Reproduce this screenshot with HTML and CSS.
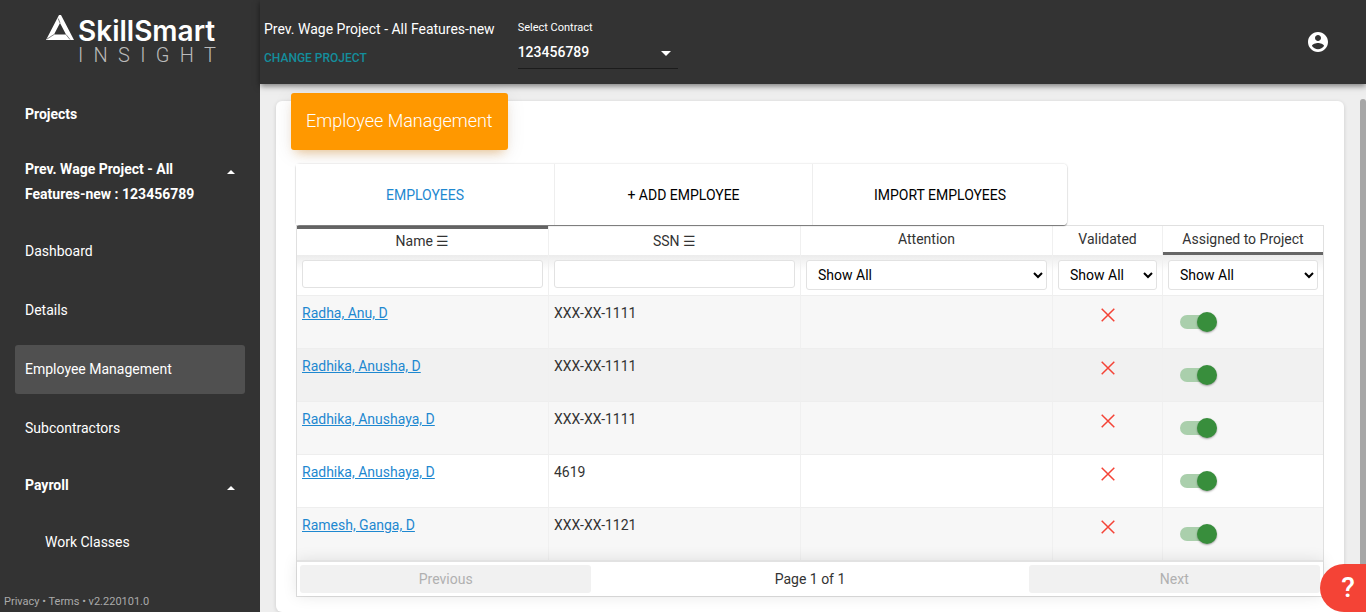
FILE: index.html
```html
<!DOCTYPE html>
<html lang="en">
<head>
<meta charset="utf-8">
<meta name="viewport" content="width=device-width, initial-scale=1">
<title>Employee Management</title>
<link rel="stylesheet" href="styles.css">
</head>
<body>
<div class="app">
  <aside class="sidebar">
    <a class="brand" href="#" aria-label="SkillSmart Insight">
      <svg class="brand-mark" viewBox="0 0 28 26" aria-hidden="true">
        <path fill="#fff" fill-rule="evenodd" d="M13 0H15L28 25H0ZM14 8 8 19.500H20Z"/>
        <path stroke="#333" stroke-width=".6" fill="none" d="M14 8 12.200 3.500M8 19.500 1 24M20 19.500 24 24.500"/>
      </svg>
      <span class="brand-words">
        <span class="brand-name">SkillSmart</span>
        <span class="brand-sub"><span>I</span><span>N</span><span>S</span><span>I</span><span>G</span><span>H</span><span>T</span></span>
      </span>
    </a>
    <nav class="nav">
      <a class="nav-link strong" href="#">Projects</a>
      <button class="nav-group two-line" type="button"><span>Prev. Wage Project - All Features-new : 123456789</span><svg class="caret" viewBox="0 0 8 4" aria-hidden="true"><path fill="#fff" d="M0 4 4 0 8 4Z"/></svg></button>
      <a class="nav-link" href="#">Dashboard</a>
      <a class="nav-link" href="#">Details</a>
      <a class="nav-link active" href="#">Employee Management</a>
      <a class="nav-link" href="#">Subcontractors</a>
      <button class="nav-group" type="button"><span>Payroll</span><svg class="caret" viewBox="0 0 8 4" aria-hidden="true"><path fill="#fff" d="M0 4 4 0 8 4Z"/></svg></button>
      <a class="nav-link nested" href="#">Work Classes</a>
    </nav>
    <footer class="legal"><a href="#">Privacy</a> • <a href="#">Terms</a> • v2.220101.0</footer>
  </aside>
  <div class="content">
    <header class="topbar">
      <div class="project">
        <span class="project-name">Prev. Wage Project - All Features-new</span>
        <button class="change" type="button">CHANGE PROJECT</button>
      </div>
      <div class="contract">
        <label for="contract">Select Contract</label>
        <div class="contract-field">
          <select id="contract"><option>123456789</option></select>
          <svg class="contract-arrow" viewBox="0 0 10 5" aria-hidden="true"><path fill="#fff" d="M0 0H10L5 5Z"/></svg>
        </div>
      </div>
      <button class="account" type="button" aria-label="Account">
        <svg viewBox="0 0 24 24" aria-hidden="true"><path fill="#fff" d="M12 2C6.480 2 2 6.480 2 12s4.480 10 10 10 10-4.480 10-10S17.520 2 12 2zm0 3c1.660 0 3 1.340 3 3s-1.340 3-3 3-3-1.340-3-3 1.340-3 3-3zm0 14.200c-2.500 0-4.710-1.280-6-3.220.030-1.990 4-3.080 6-3.080 1.990 0 5.970 1.090 6 3.080-1.290 1.940-3.500 3.220-6 3.220z"/></svg>
      </button>
    </header>
    <main class="main">
      <section class="card">
        <h1 class="card-title">Employee Management</h1>
        <div class="tabs" role="tablist">
          <button class="tab selected" type="button" role="tab" aria-selected="true">EMPLOYEES</button>
          <button class="tab" type="button" role="tab" aria-selected="false">+ ADD EMPLOYEE</button>
          <button class="tab" type="button" role="tab" aria-selected="false">IMPORT EMPLOYEES</button>
        </div>
        <div class="grid">
          <table>
            <colgroup><col><col><col><col class="col-validated"><col class="col-assigned"></colgroup>
            <thead>
              <tr class="heads">
                <th class="sortable sort-asc" scope="col">Name ☰</th><th class="sortable" scope="col">SSN ☰</th><th scope="col">Attention</th><th scope="col">Validated</th><th class="sort-desc" scope="col">Assigned to Project</th>
              </tr>
              <tr class="filters">
                <td><input type="text" aria-label="Filter by name"></td>
                <td><input type="text" aria-label="Filter by SSN"></td>
                <td><select aria-label="Filter by attention"><option>Show All</option></select></td>
                <td><select aria-label="Filter by validated"><option>Show All</option></select></td>
                <td><select aria-label="Filter by assigned to project"><option>Show All</option></select></td>
              </tr>
            </thead>
            <tbody>
              <tr><td><a href="#">Radha, Anu, D</a></td><td>XXX-XX-1111</td><td></td><td class="status"><svg viewBox="0 0 14 14" role="img" aria-label="Not validated"><path d="M.7.7 13.300 13.300M13.300.7.7 13.300"/></svg></td><td class="assign"><input class="switch" type="checkbox" checked aria-label="Assign Radha, Anu, D"></td></tr>
              <tr class="hovered"><td><a href="#">Radhika, Anusha, D</a></td><td>XXX-XX-1111</td><td></td><td class="status"><svg viewBox="0 0 14 14" role="img" aria-label="Not validated"><path d="M.7.7 13.300 13.300M13.300.7.7 13.300"/></svg></td><td class="assign"><input class="switch" type="checkbox" checked aria-label="Assign Radhika, Anusha, D"></td></tr>
              <tr><td><a href="#">Radhika, Anushaya, D</a></td><td>XXX-XX-1111</td><td></td><td class="status"><svg viewBox="0 0 14 14" role="img" aria-label="Not validated"><path d="M.7.7 13.300 13.300M13.300.7.7 13.300"/></svg></td><td class="assign"><input class="switch" type="checkbox" checked aria-label="Assign Radhika, Anushaya, D"></td></tr>
              <tr><td><a href="#">Radhika, Anushaya, D</a></td><td>4619</td><td></td><td class="status"><svg viewBox="0 0 14 14" role="img" aria-label="Not validated"><path d="M.7.7 13.300 13.300M13.300.7.7 13.300"/></svg></td><td class="assign"><input class="switch" type="checkbox" checked aria-label="Assign Radhika, Anushaya, D"></td></tr>
              <tr><td><a href="#">Ramesh, Ganga, D</a></td><td>XXX-XX-1121</td><td></td><td class="status"><svg viewBox="0 0 14 14" role="img" aria-label="Not validated"><path d="M.7.7 13.300 13.300M13.300.7.7 13.300"/></svg></td><td class="assign"><input class="switch" type="checkbox" checked aria-label="Assign Ramesh, Ganga, D"></td></tr>
            </tbody>
          </table>
          <div class="pager">
            <button type="button" disabled>Previous</button>
            <span>Page 1 of 1</span>
            <button type="button" disabled>Next</button>
          </div>
        </div>
      </section>
    </main>
    <div class="scroll-thumb" aria-hidden="true"></div>
  </div>
  <button class="help" type="button" aria-label="Help">?</button>
</div>
</body>
</html>
```
FILE: styles.css
```css
* { box-sizing: border-box; }

body {
  margin: 0;
  background: #eee;
  color: #333;
  font: 14px/20px Roboto, sans-serif;
}

button, input, select { font: inherit; }
button { border: 0; padding: 0; cursor: pointer; }
svg { display: block; }

.app { display: flex; height: 100vh; overflow: hidden; }

/* Sidebar */
.sidebar {
  display: flex;
  flex-direction: column;
  flex: 0 0 260px;
  background: #333;
  color: #fff;
}
.sidebar a { color: inherit; text-decoration: none; }
.brand { display: flex; gap: 4px; height: 80px; padding: 15px 44px 0 46px; }
.brand-mark { flex: none; width: 28px; height: 26px; }
.brand-words { display: flex; flex-direction: column; flex: 1; padding-top: 1px; }
.brand-name { font: 600 28px/30px Inter, sans-serif; }
.brand-sub {
  display: flex;
  justify-content: space-between;
  color: #bbb;
  font: 300 20px/18px Roboto, sans-serif;
}
.nav {
  display: flex;
  flex-direction: column;
  flex: 1;
  gap: 10px;
  padding: 10px 15px 0;
}
.nav-link {
  display: flex;
  align-items: center;
  height: 49px;
  padding: 0 10px 2px;
  border-radius: 3px;
}
.nav-link.active { background: #505050; }
.nav-link.nested { padding-left: 30px; }
.nav-link.strong { height: 48px; padding-bottom: 0; }
.strong, .nav-group { font-weight: 700; }
.nav-group {
  display: flex;
  align-items: center;
  justify-content: space-between;
  gap: 30px;
  min-height: 45px;
  padding: 0 10px;
  background: none;
  color: #fff;
  line-height: 25px;
  text-align: left;
}
.nav-group.two-line { min-height: 69px; align-items: flex-start; padding-top: 9px; }
.caret { flex: none; width: 8px; height: 4px; margin-top: 4px; }
.two-line .caret { margin-top: 13px; }
.legal { padding: 0 4px 2px; color: #aaa; font-size: 11px; line-height: 16px; }

/* Top bar */
.content { position: relative; display: flex; flex-direction: column; flex: 1; min-width: 0; }
.topbar {
  position: relative;
  z-index: 1;
  display: flex;
  gap: 23px;
  flex: 0 0 84px;
  padding: 0 38px 0 4px;
  background: #333;
  color: #fff;
  box-shadow: 0 2px 6px rgba(0, 0, 0, .5);
}
.project { display: flex; flex-direction: column; align-items: flex-start; gap: 9px; padding-top: 19px; }
.change { background: none; color: #138e9c; font-size: 12px; font-weight: 500; line-height: 20px; }
.contract { width: 160px; padding-top: 20px; }
.contract label { display: block; font-size: 11px; line-height: 16px; }
.contract-field { position: relative; border-bottom: 1px solid #1c1c1c; }
.contract select {
  width: 100%;
  height: 32px;
  padding: 0;
  border: 0;
  background: none;
  color: #fff;
  font-weight: 500;
  appearance: none;
}
.contract-arrow { position: absolute; right: 7px; top: 15px; width: 10px; height: 5px; }
.account { align-self: center; margin-left: auto; background: none; }
.account svg { width: 24px; height: 24px; margin-right: -2px; }

/* Card */
.main { flex: 1; min-height: 0; overflow: hidden; padding: 9px 22px 0 16px; }
.card {
  margin-top: 8px;
  padding: 0 20px 15px;
  border-radius: 6px;
  background: #fff;
  box-shadow: 0 1px 4px rgba(0, 0, 0, .14);
}
.card-title {
  width: fit-content;
  margin: 0 0 6px -5px;
  padding: 15px 15px 17px;
  border-radius: 3px;
  background: #ff9800;
  color: #fff;
  font-size: 18px;
  font-weight: 300;
  line-height: 25px;
  box-shadow: 0 4px 20px rgba(0, 0, 0, .08), 0 7px 10px -5px rgba(230, 130, 0, .4);
  transform: translateY(-8px);
}
.tabs {
  position: relative;
  display: grid;
  grid-template-columns: 259fr 258fr 254fr;
  width: 75%;
  border-radius: 4px;
  box-shadow: 0 0 2px rgba(0, 0, 0, .2), 0 1px 1px rgba(0, 0, 0, .45);
}
.tab {
  height: 61px;
  border-right: 1px solid #eee;
  background: #fff;
  color: #000;
}
.tab:last-child { border-right: 0; border-radius: 0 4px 4px 0; }
.tab.selected { color: #1e88d0; }

/* Employee table */
.grid { border: 1px solid #e0e0e0; }
table { width: 100%; table-layout: fixed; border-collapse: separate; border-spacing: 0; }
.col-validated { width: 110px; }
.col-assigned { width: 160px; }
th, td { border-right: 1px solid #f0f0f0; font-weight: 400; }
th:last-child, td:last-child { border-right: 0; }
th { height: 29px; padding: 3px 5px 6px; vertical-align: top; }
th.sortable { padding: 5px 5px 4px; }
.sort-asc { box-shadow: inset 0 3px #666; }
.sort-desc { box-shadow: inset 0 -3px #666; }
.filters td {
  height: 40px;
  padding: 5px 5px 4px;
  vertical-align: top;
  background: linear-gradient(#ececec, #fff 16px);
}
.filters input, .filters select {
  display: block;
  width: 100%;
  height: 30px;
  border: 1px solid #e2e2e2;
  border-radius: 3px;
  background-color: #fff;
  color: #000;
}
.filters input { height: 28px; padding: 0 7px; }
.filters select { padding: 0 7px; }
tbody td { height: 53px; padding: 7px 5px 0; border-top: 1px solid #eee; vertical-align: top; }
tbody tr:nth-child(odd) { background: #f7f7f7; }
tbody tr.hovered { background: #f1f1f1; }
tbody a { color: #1e88d0; }
.status svg { width: 14px; height: 14px; margin: 5px auto 0; stroke: #f44336; stroke-width: 1.5; }
.switch {
  display: block;
  width: 34px;
  height: 14px;
  margin: 12px 0 0 12px;
  border-radius: 7px;
  background: #aacfac;
  appearance: none;
}
.switch::before {
  content: "";
  display: block;
  width: 20px;
  height: 20px;
  border-radius: 50%;
  background: #388e3c;
  box-shadow: 0 1px 2px rgba(0, 0, 0, .35);
  transform: translate(17px, -3px);
}
.pager {
  position: relative;
  display: grid;
  grid-template-columns: 1fr 1.5fr 1fr;
  align-items: center;
  padding: 3px;
  border-top: 2px solid #e2e2e2;
  background: #fff;
  text-align: center;
  box-shadow: 0 0 15px rgba(0, 0, 0, .1);
}
.pager button { height: 28px; border-radius: 3px; background: #f1f1f1; color: #b0b0b0; }

/* Overlays */
.scroll-thumb {
  position: absolute;
  top: 99px;
  right: 0;
  bottom: 0;
  width: 6px;
  border-radius: 3px 3px 0 0;
  background: #a6a6a6;
}
.help {
  position: absolute;
  right: 0;
  bottom: 0;
  width: 46px;
  height: 48px;
  padding-left: 10px;
  border-radius: 24px 0 0 24px;
  background: #f44336;
  color: #fff;
  font-size: 28px;
  font-weight: 500;
}
```
